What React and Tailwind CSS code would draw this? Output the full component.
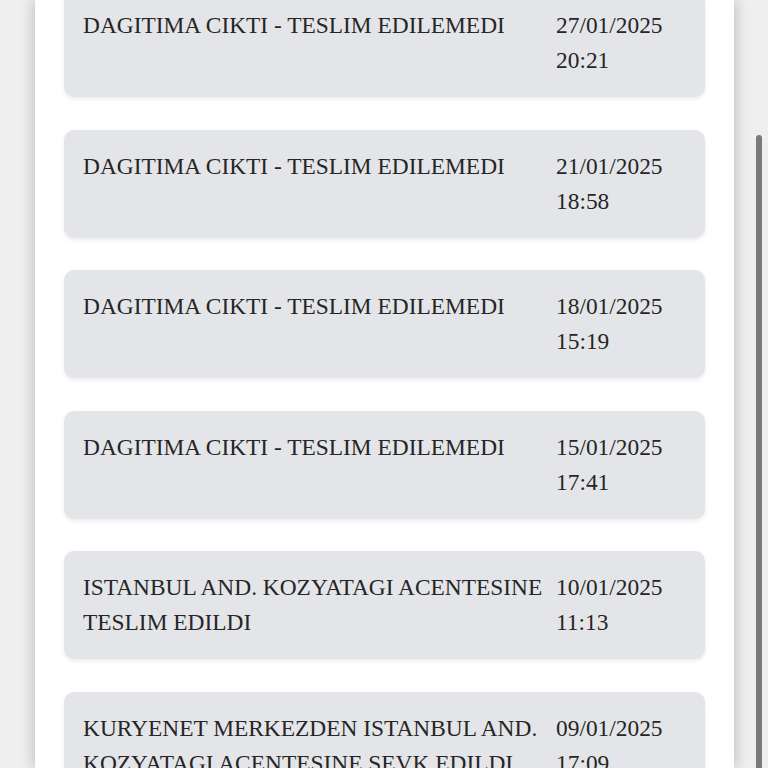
const events = [
  { text: "DAGITIMA CIKTI - TESLIM EDILEMEDI", date: "27/01/2025", time: "20:21" },
  { text: "DAGITIMA CIKTI - TESLIM EDILEMEDI", date: "21/01/2025", time: "18:58" },
  { text: "DAGITIMA CIKTI - TESLIM EDILEMEDI", date: "18/01/2025", time: "15:19" },
  { text: "DAGITIMA CIKTI - TESLIM EDILEMEDI", date: "15/01/2025", time: "17:41" },
  { text: "ISTANBUL AND. KOZYATAGI ACENTESINE TESLIM EDILDI", date: "10/01/2025", time: "11:13" },
  {
    text: "KURYENET MERKEZDEN ISTANBUL AND. KOZYATAGI ACENTESINE SEVK EDILDI",
    date: "09/01/2025",
    time: "17:09",
  },
];

function EventCard({ text, date, time }) {
  return (
    <div className="flex rounded-[10px] bg-[#e4e5e8] px-[19px] py-[19px] shadow-[0_2px_4px_rgba(0,0,0,0.08)]">
      <div className="flex-1 pr-[2px]">{text}</div>
      <div className="w-[130px] shrink-0">
        <div>{date}</div>
        <div>{time}</div>
      </div>
    </div>
  );
}

export default function App() {
  return (
    <div className="flex h-screen overflow-hidden bg-[#efefef] font-['Liberation_Serif',_'Times_New_Roman',_serif] text-[23.4px] leading-[35px] text-[#262626]">
      <div className="ml-[35px] w-[699px] shrink-0 bg-white px-[29px] shadow-[0_0_14px_rgba(0,0,0,0.25)]">
        <div className="-mt-[11px] flex flex-col gap-[32.5px]">
          {events.map((e) => (
            <EventCard key={e.date} {...e} />
          ))}
        </div>
      </div>
      <div className="flex-1 pl-[22px]">
        <div className="mt-[135px] h-[700px] w-[6px] rounded-full bg-[#7a7a7a]" />
      </div>
    </div>
  );
}
